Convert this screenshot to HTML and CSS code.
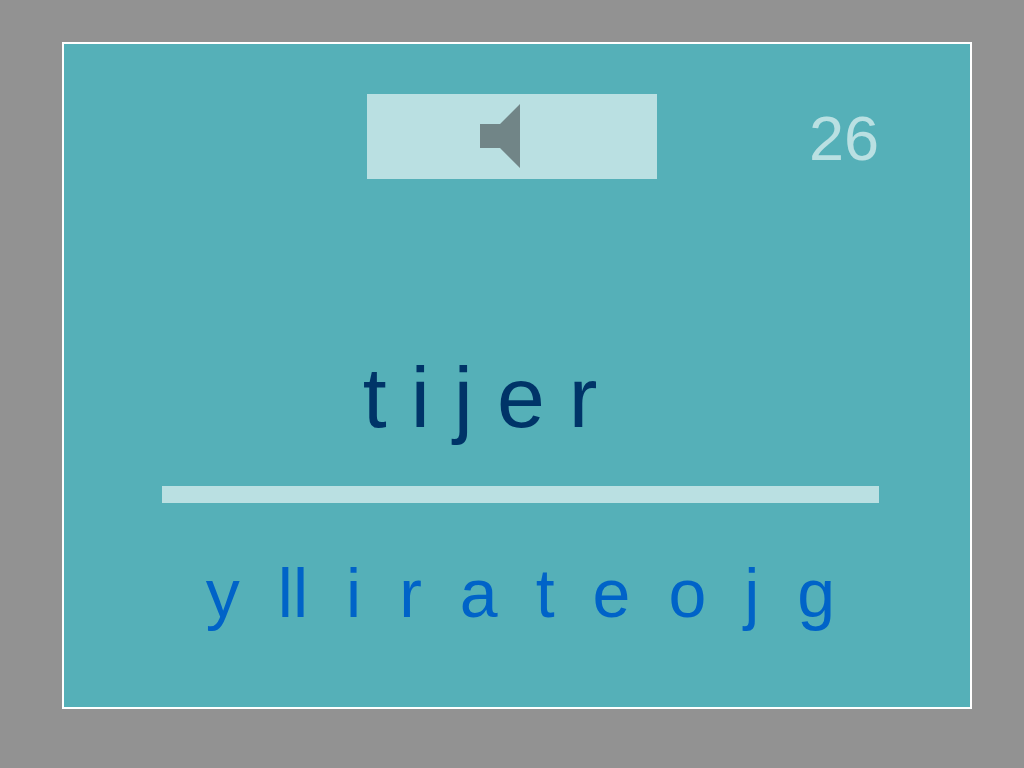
FILE: index.html
```html
<!DOCTYPE html>
<html lang="es">
<head>
    <meta charset="UTF-8">
    <meta name="viewport" content="width=device-width, initial-scale=1.0">
    <title>Dictado</title>
    <link rel="stylesheet" href="styles.css">
</head>
<body>
    <main class="board">
        <div class="top">
            <button type="button" class="listen" aria-label="Escuchar">
                <svg class="speaker" viewBox="0 0 40 64" aria-hidden="true">
                    <path d="M0 20H20L40 0V64L20 44H0Z"/>
                </svg>
            </button>
            <span class="score">26</span>
        </div>

        <div class="word">
            <span>t</span>
            <span>i</span>
            <span>j</span>
            <span>e</span>
            <span>r</span>
        </div>

        <div class="bar"></div>

        <div class="letters">
            <button type="button">y</button>
            <button type="button">ll</button>
            <button type="button">i</button>
            <button type="button">r</button>
            <button type="button">a</button>
            <button type="button">t</button>
            <button type="button">e</button>
            <button type="button">o</button>
            <button type="button">j</button>
            <button type="button">g</button>
        </div>
    </main>
</body>
</html>
```
FILE: styles.css
```css
* {
    box-sizing: border-box;
    margin: 0;
    padding: 0;
    font-family: "Liberation Sans", Arial, Helvetica, sans-serif;
}

body {
    background-color: #929292;
    display: flex;
    min-height: 100vh;
    padding: 42px 52px 59px 62px;
}

.board {
    flex: 1;
    background-color: #55b0b8;
    border: 2px solid #fff;
    padding: 50px 91px 0 98px;
}

button {
    background: none;
    border: none;
    cursor: pointer;
}

.top {
    display: grid;
    grid-template-columns: 205fr 290fr 222fr;
    align-items: start;
}

.listen {
    grid-column: 2;
    display: flex;
    justify-content: center;
    align-items: center;
    padding: 10px 24px 11px 0;
    background-color: #bae0e2;
}

.speaker {
    width: 40px;
    height: 64px;
    fill: #718587;
}

.score {
    color: #bae0e2;
    font-size: 63px;
    line-height: 88px;
    text-align: right;
}

.word {
    display: flex;
    gap: 24px;
    margin-top: 163px;
    padding-left: 28%;
    color: #003468;
    font-size: 86px;
    line-height: 104px;
}

.bar {
    height: 17px;
    margin-top: 37px;
    background-color: #bae0e2;
}

.letters {
    display: flex;
    justify-content: center;
    gap: 38px;
    margin-top: 48px;
}

.letters button {
    color: #0063c8;
    font-size: 68px;
    line-height: 84px;
}

.letters button:hover {
    color: #003468;
}
```
